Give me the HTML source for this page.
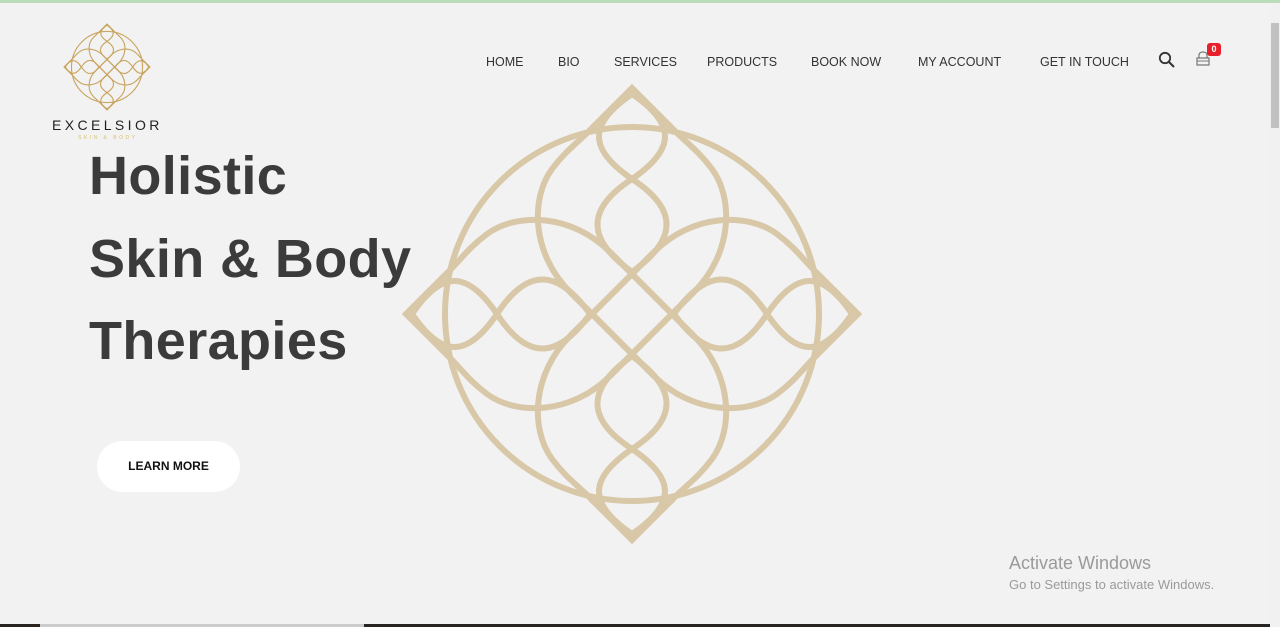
<!DOCTYPE html>
<html><head><meta charset="utf-8"><style>
*{margin:0;padding:0;box-sizing:border-box}
body{width:1280px;height:627px;background:#f2f2f2;position:relative;overflow:hidden;font-family:"Liberation Sans",sans-serif}
.top{position:absolute;left:0;top:0;width:1280px;height:3px;background:#b9dcb9}
.nav a{position:absolute;top:55px;font-size:12.5px;color:#333;text-decoration:none}
h1{position:absolute;left:89px;font-size:54px;font-weight:bold;color:#3b3b3b;letter-spacing:0.4px;line-height:1}
.btn{position:absolute;left:97px;top:441px;width:143px;height:51px;background:#fff;border-radius:26px;font-size:12px;font-weight:bold;color:#111;text-align:center;line-height:51px}
.sb{position:absolute;right:0;top:3px;width:10px;height:624px;background:#f1f1f1}
.thumb{position:absolute;right:1px;top:20px;width:8px;height:105px;background:#c1c1c1}
.win{position:absolute;left:1009px;color:#9a9a9a}
</style></head><body>
<div class="top"></div>
<svg width="0" height="0" style="position:absolute"><defs>
<g id="em" fill="none" stroke-width="6">
<circle r="187"/>
<g id="q">
<path d="M22,62 L-62,-22 C-100,-60 -102,-115 -80,-145 C-65,-165 -52,-173 -40,-186 L0,-226 L40,-186 C52,-173 65,-165 80,-145 C102,-115 100,-60 62,-22 L-22,62"/>
<path d="M0,-220 C-44,-190 -44,-165 0,-135 C44,-165 44,-190 0,-220 Z"/>
<path d="M0,-135 C-46,-105 -46,-75 0,-42 C46,-75 46,-105 0,-135 Z"/>
</g>
<use href="#q" transform="rotate(90)"/>
<use href="#q" transform="rotate(180)"/>
<use href="#q" transform="rotate(270)"/>
</g>
</defs></svg>
<svg style="position:absolute;left:0;top:0" width="1280" height="627">
<g transform="translate(632,314)"><use href="#em" stroke="#d8c8a8"/></g>
<g transform="translate(107,67) scale(0.19)"><use href="#em" stroke="#c9a55f" style="stroke-width:9"/></g>
</svg>
<div style="position:absolute;left:52px;top:117px;font-size:14px;letter-spacing:3.4px;color:#222">EXCELSIOR</div>
<div style="position:absolute;left:78px;top:135px;font-size:5px;letter-spacing:2.5px;color:#d8bf70">SKIN &amp; BODY</div>
<div class="nav">
<a style="left:486px">HOME</a><a style="left:558px">BIO</a><a style="left:614px">SERVICES</a><a style="left:707px">PRODUCTS</a><a style="left:811px">BOOK NOW</a><a style="left:918px">MY ACCOUNT</a><a style="left:1040px">GET IN TOUCH</a>
</div>
<svg style="position:absolute;left:1158px;top:51px" width="18" height="18"><circle cx="7" cy="7" r="5.2" fill="none" stroke="#333" stroke-width="1.8"/><line x1="11" y1="11" x2="16" y2="16" stroke="#333" stroke-width="2"/></svg>
<svg style="position:absolute;left:1194px;top:48px" width="20" height="20"><path d="M3,17 L3,10 L15,10 L15,17 Z M5,10 L5,7 C5,3 13,3 13,7 L13,10" fill="none" stroke="#777" stroke-width="1.2"/><line x1="3" y1="13" x2="15" y2="13" stroke="#777"/></svg>
<div style="position:absolute;left:1207px;top:43px;width:14px;height:13px;background:#e8202a;border-radius:3px;color:#fff;font-size:9px;font-weight:bold;text-align:center;line-height:13px">0</div>
<h1 style="top:149px">Holistic</h1>
<h1 style="top:232px">Skin &amp; Body</h1>
<h1 style="top:314px">Therapies</h1>
<div class="btn">LEARN MORE</div>
<div class="win" style="top:553px;font-size:18px">Activate Windows</div>
<div class="win" style="top:577px;font-size:13px">Go to Settings to activate Windows.</div>
<div class="sb"><div class="thumb"></div></div>
<div style="position:absolute;left:0;top:624px;width:40px;height:3px;background:#2a2420"></div>
<div style="position:absolute;left:40px;top:624px;width:324px;height:3px;background:#ccc"></div>
<div style="position:absolute;left:364px;top:624px;width:906px;height:3px;background:#2a2420"></div>
</body></html>
